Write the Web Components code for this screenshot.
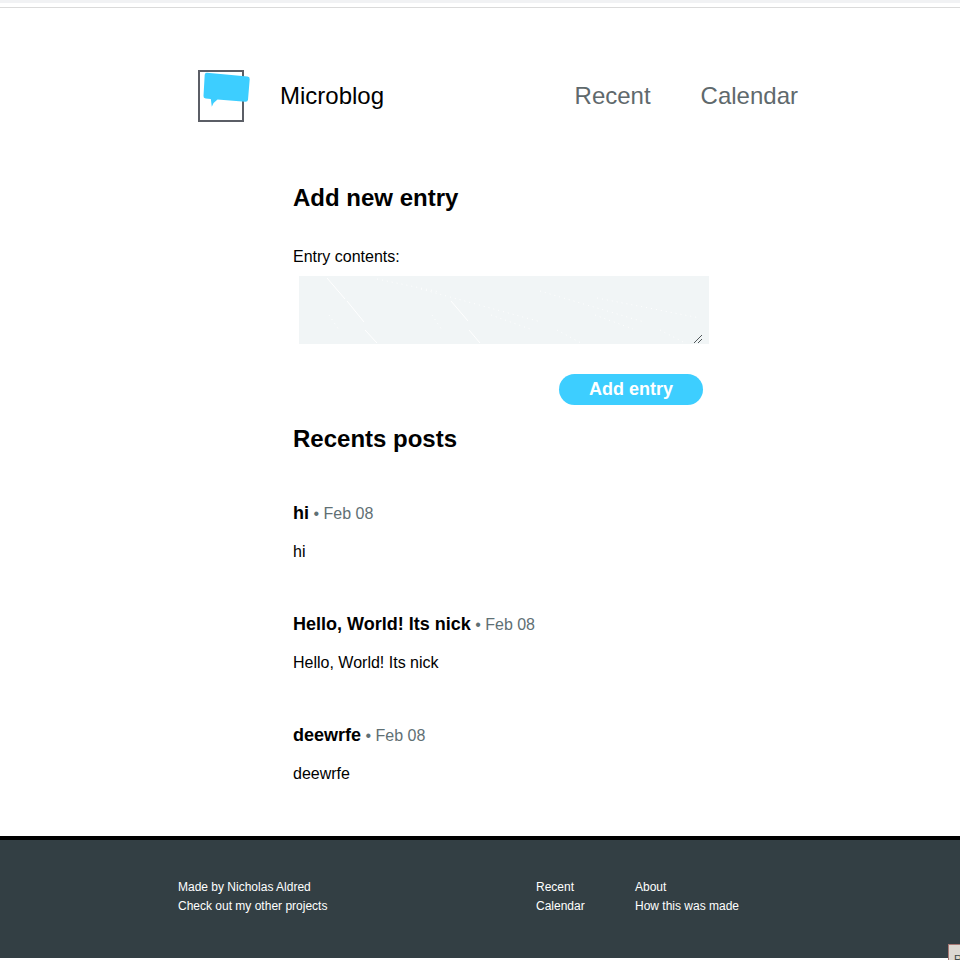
<!DOCTYPE html>
<html lang="en">
<head>
<meta charset="utf-8">
<title>Microblog</title>
<style>
html,body{margin:0;background:#fff;color:#000;font-family:"Liberation Sans",Arial,sans-serif;overflow:hidden}
</style>
</head>
<body>
<micro-page></micro-page>
<script>
function define(name, html) {
  const t = document.createElement('template');
  t.innerHTML = html;
  customElements.define(name, class extends HTMLElement {
    constructor() {
      super();
      this.attachShadow({mode: 'open'}).append(t.content.cloneNode(true));
    }
  });
}

define('browser-edge', `
<style>:host{display:block;box-sizing:border-box;height:8px;border-bottom:1px solid #dadada;background:linear-gradient(#f1f2f4 3px,#fff 3px)}</style>`);

define('micro-logo', `
<style>:host{display:block;width:56px;height:56px}svg{display:block}</style>
<svg width="56" height="56" viewBox="0 0 56 56">
  <rect x="3" y="3" width="44" height="50" fill="#fff" stroke="#5b5e66" stroke-width="2"/>
  <path d="M11 4.800 L51.500 8.500 Q53.900 8.800 53.700 11.300 L52 31.700 Q51.700 34 49.300 33.800 L21.500 31.500 Q17.500 34 15.800 38.800 L14.800 31 L9.700 30.500 Q7.300 30.200 7.500 28 L8.700 6.800 Q9 4.600 11 4.800Z" fill="#3dceff"/>
</svg>`);

define('nav-link', `<style>:host{display:block;font-size:24px;line-height:27px;color:#5f696c}</style><slot></slot>`);

define('site-header', `
<style>
:host{display:flex;align-items:flex-start;height:56px;padding:60px 162px 0 196px}
.brand{font-size:24px;line-height:27px;margin:14px 0 0 28px}
nav{display:flex;gap:50px;margin:14px 0 0 auto}
</style>
<micro-logo></micro-logo><span class="brand">Microblog</span>
<nav><nav-link>Recent</nav-link><nav-link>Calendar</nav-link></nav>`);

define('section-title', `<style>:host{display:block}h2{margin:0;font-size:24px;line-height:27px}</style><h2><slot></slot></h2>`);

define('entry-form', `
<style>
:host{display:block;padding-top:37px}
label{display:block;font-size:16px;line-height:18px}
.field{display:grid;width:410px;height:68px;margin:10px 0 0 6px;background:#f1f5f6}
.field svg{display:block}
button{display:block;width:144px;height:31px;margin:30px 0 0 266px;padding:0;border:0;border-radius:16px;background:#3dceff;color:#fff;font:bold 18px/31px "Liberation Sans",Arial,sans-serif}
</style>
<label>Entry contents:</label>
<div class="field" role="textbox">
<svg width="410" height="68" viewBox="0 0 410 68" fill="none">
  <g stroke="#fff" stroke-width="1">
    <path d="M28 2L46 23M48 25L65 46M66 54L78 67M152 25L169 45M170 54L181 67"/>
    <path stroke-dasharray="1 4" d="M78 3L141 16 M122 13L242 46M192 39L231 53M258 54L282 67M241 15L345 46M296 39L334 53M361 54L386 67M298 22L401 42M30 39L40 54M133 39L143 54"/>
  </g>
  <path d="M395 67L403 59M399 67L403 63" stroke="#50575a" stroke-width="1"/>
</svg></div>
<button>Add entry</button>`);

define('blog-post', `
<style>
:host{display:block;height:111px}
.head{font-size:16px;line-height:22px;color:#5f7074}
b{font-size:18px;color:#000}
.body{font-size:16px;line-height:18px;margin-top:18px}
</style>
<div class="head"><b><slot name="title"></slot></b> • <slot name="date"></slot></div>
<div class="body"><slot></slot></div>`);

define('site-footer', `
<style>
:host{display:flex;box-sizing:border-box;height:122px;border-top:4px solid #000;background:#333f44;color:#fff;padding:38px 0 0 178px;font-size:12px;line-height:19px}
div{white-space:nowrap}
.about{width:358px}.nav{width:99px}
</style>
<div class="about">Made by Nicholas Aldred<br>Check out my other projects</div>
<div class="nav">Recent<br>Calendar</div>
<div>About<br>How this was made</div>`);

define('corner-tip', `
<style>:host{position:absolute;right:0;bottom:0;width:12px;height:16px;box-sizing:border-box;border:1px solid #a87874;border-width:1px 0 0 1px;background:#dcd8d2;color:#3c4a48;overflow:hidden;font-size:11px;line-height:12px;padding:8px 0 0 5px}</style>R`);

define('micro-page', `
<style>
:host{display:flex;flex-direction:column;position:relative;width:960px;height:960px;overflow:hidden}
main{padding:60px 0 0 293px;flex:1}
.recent{margin-top:20px}
.posts{padding-top:50px}
site-footer{margin-bottom:2px}
</style>
<browser-edge></browser-edge>
<site-header></site-header>
<main>
  <section-title>Add new entry</section-title>
  <entry-form></entry-form>
  <section-title class="recent">Recents posts</section-title>
  <div class="posts">
    <blog-post><span slot="title">hi</span><span slot="date">Feb 08</span>hi</blog-post>
    <blog-post><span slot="title">Hello, World! Its nick</span><span slot="date">Feb 08</span>Hello, World! Its nick</blog-post>
    <blog-post style="height:60px"><span slot="title">deewrfe</span><span slot="date">Feb 08</span>deewrfe</blog-post>
  </div>
</main>
<site-footer></site-footer>
<corner-tip></corner-tip>`);
</script>
</body>
</html>
